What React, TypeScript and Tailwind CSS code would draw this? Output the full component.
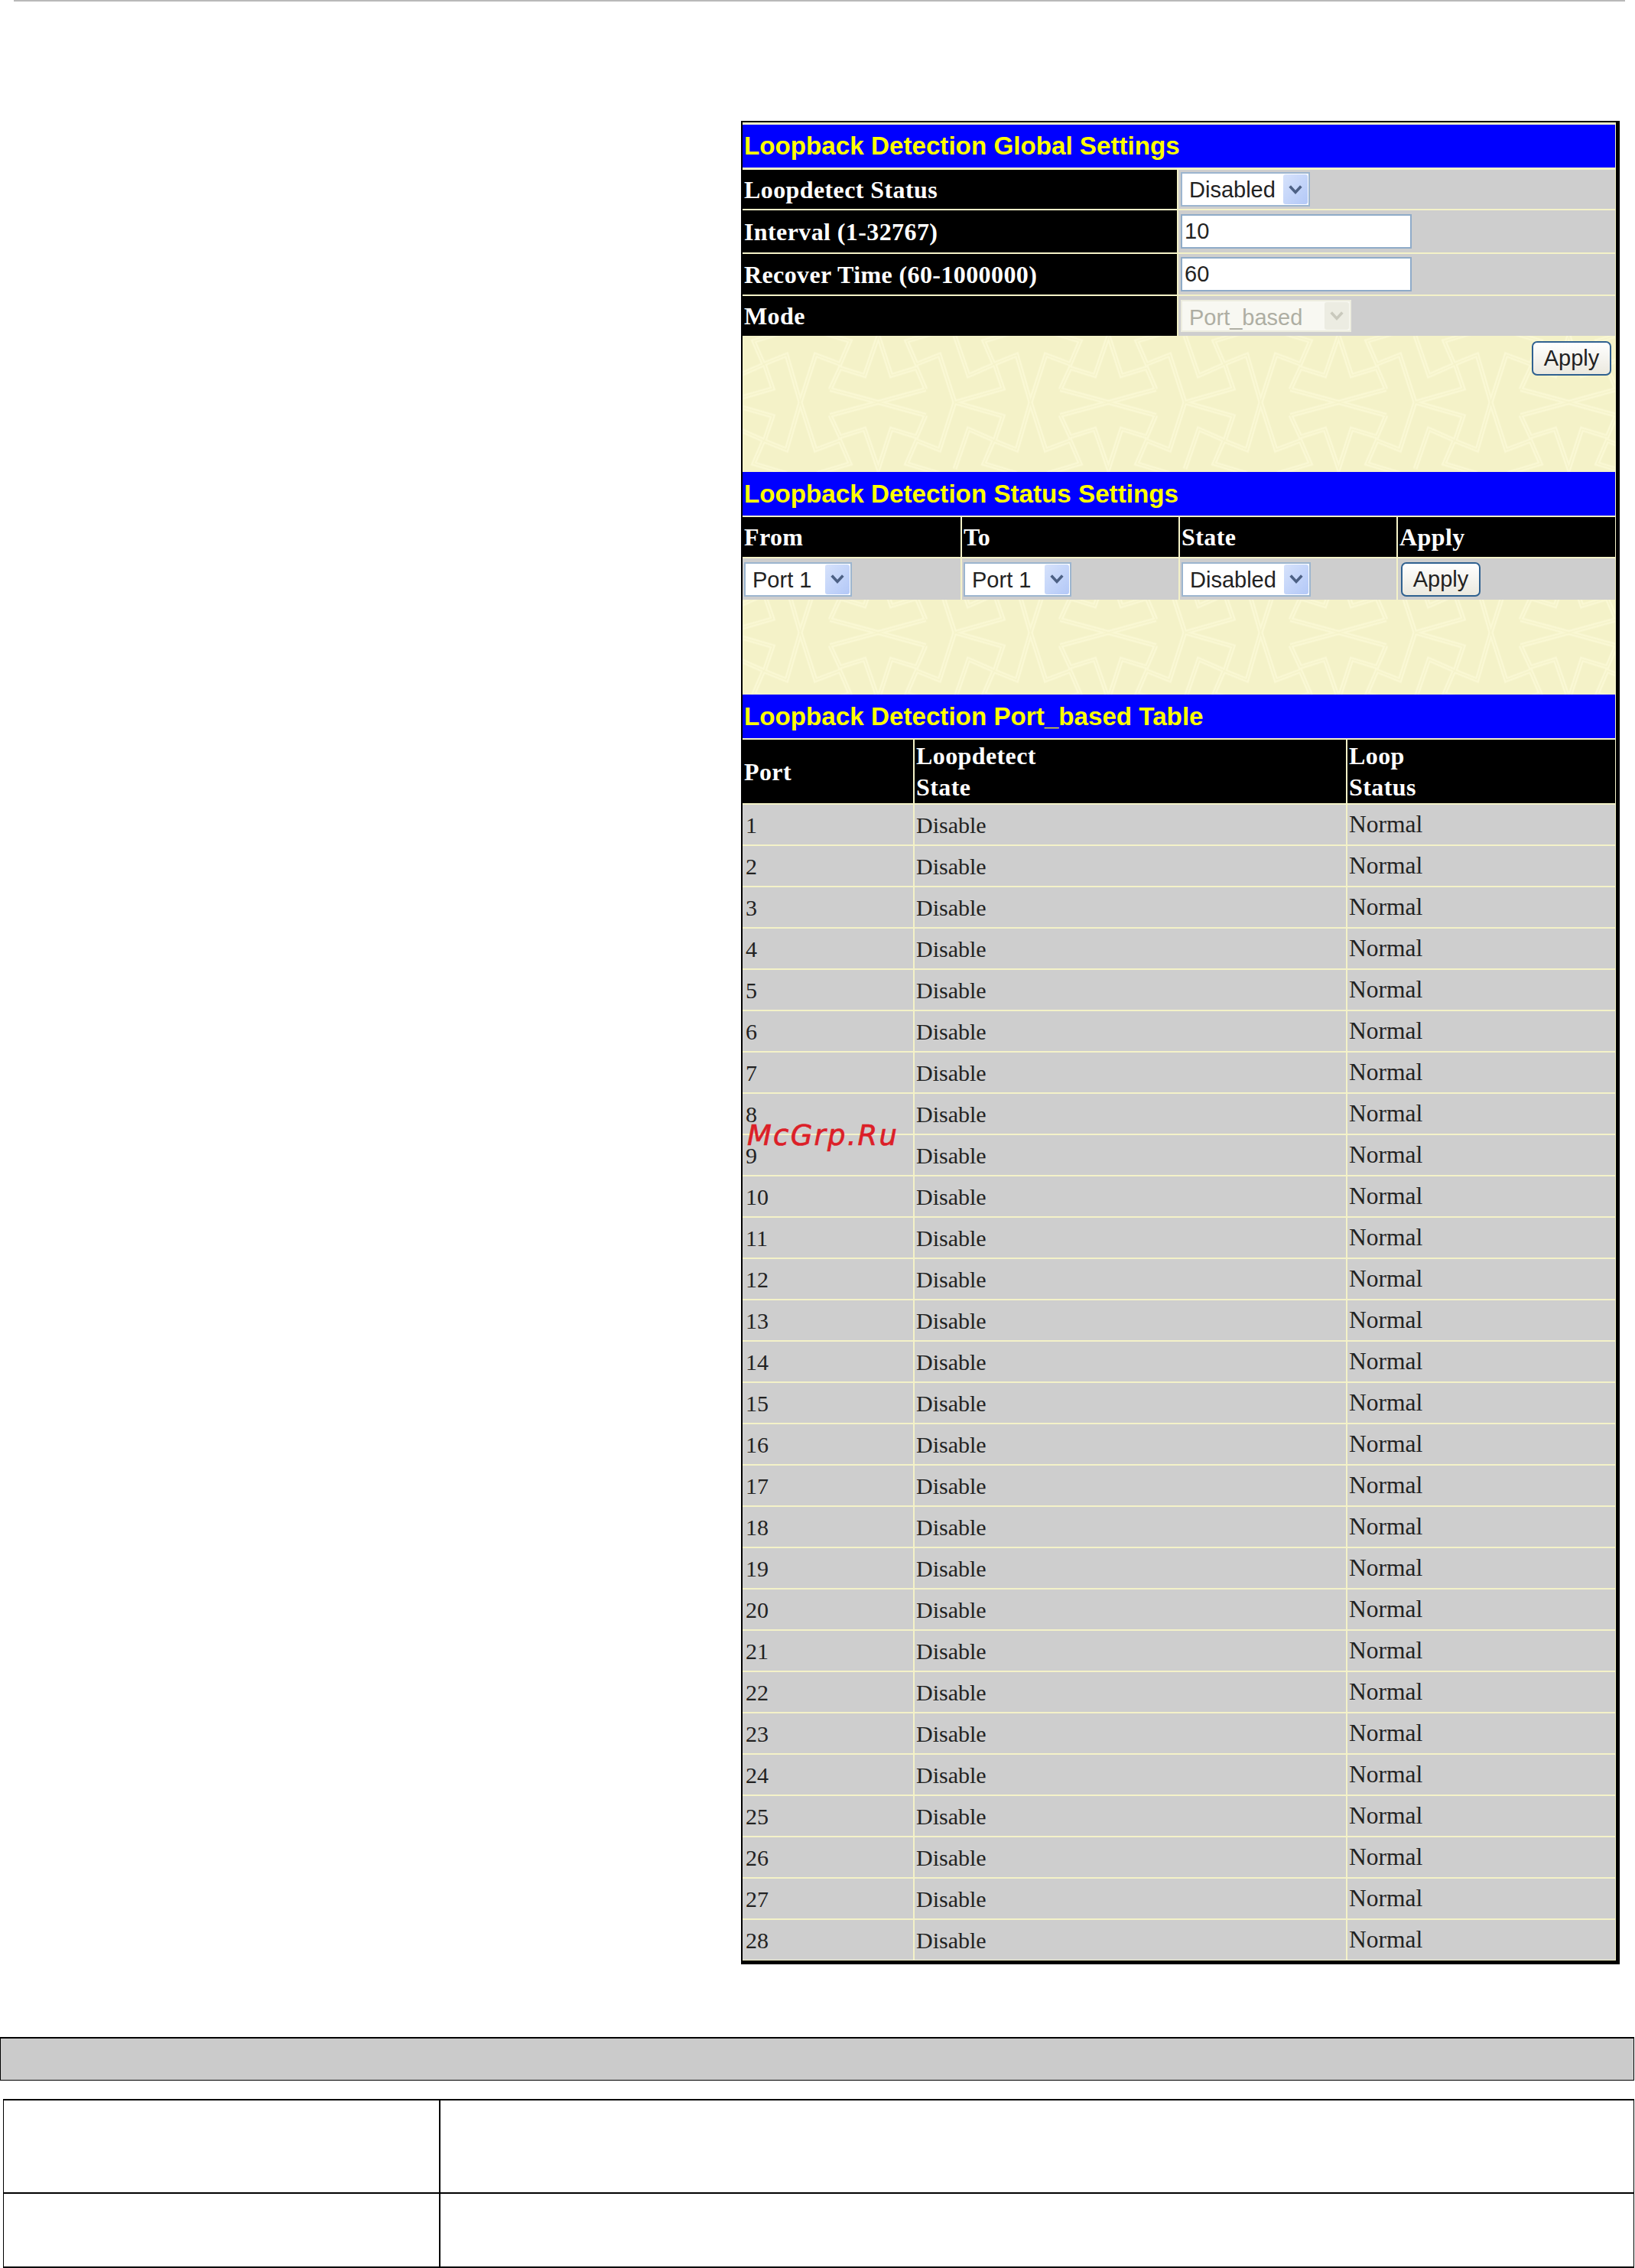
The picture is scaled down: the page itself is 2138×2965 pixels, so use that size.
const rows = Array.from({ length: 28 }, (_, i) => i + 1);

const Chevron = ({ disabled }: { disabled?: boolean }) => (
  <svg viewBox="0 0 16 12" className="w-[18px] h-[14px]">
    <path
      d="M1.5 2 L8 9 L14.5 2"
      fill="none"
      stroke={disabled ? '#c9c9bd' : '#4d6185'}
      strokeWidth="3.2"
    />
  </svg>
);

// old XP style dropdown, the blue arrow box lies over the native select
function Select({ value, className, disabled }: { value: string; className: string; disabled?: boolean }) {
  return (
    <div className={`relative ${className}`}>
      <select
        disabled={disabled}
        defaultValue={value}
        className={`appearance-none w-full h-full pl-[9px] text-[29px] font-['Liberation_Sans',sans-serif] border-2 outline-none ${
          disabled ? 'bg-[#f8f8f2] border-[#ededdf] text-[#aeaea3] opacity-100' : 'bg-white border-[#9cb5cf] text-[#222222]'
        }`}
      >
        <option>{value}</option>
      </select>
      <div
        className={`absolute right-[3px] top-[3px] bottom-[3px] w-[32px] rounded-[3px] flex items-center justify-center pointer-events-none ${
          disabled ? 'bg-[#ecece2]' : 'bg-gradient-to-br from-[#d6e2fb] to-[#b3c8f7]'
        }`}
      >
        <Chevron disabled={disabled} />
      </div>
    </div>
  );
}

const TextInput = ({ value }: { value: string }) => (
  <input
    defaultValue={value}
    className="w-[302px] h-[45px] pl-[3px] bg-white border-2 border-[#8fabc8] text-[29px] text-[#222222] font-['Liberation_Sans',sans-serif] outline-none"
  />
);

const ApplyButton = () => (
  <button className="w-[104px] h-[45px] rounded-[7px] border-2 border-[#2f6190] bg-gradient-to-b from-white to-[#ebe9df] text-[29px] leading-none text-[#222222] font-['Liberation_Sans',sans-serif]">
    Apply
  </button>
);

// upper half of the tile, origin is the flat X in the middle of the tile
const tilePaths = [
  'M-63 -17 L0 0 L62 -17',
  'M62 -17 L50 -45 L17 -35 L0 -87 L-18 -35 L-50 -45 L-63 -17',
  'M-102 0 L-82 -62 L-50 -50 L-37 -80 L-80 -93',
  'M-102 0 L-120 -62 L-150 -50 L-163 -80 L-120 -93',
  'M100 0 L80 -62 L50 -50 L37 -80 L80 -93',
  'M100 0 L163 -18 L152 -50 L118 -35 L100 -87',
];

const TileLines = () => (
  <>
    {[-301, 0, 301].map((x) => (
      <g key={x} transform={`translate(${x + 150.5} 150.5)`}>
        {tilePaths.map((d) => (
          <path key={d} d={d} />
        ))}
        <g transform="scale(1 -1)">
          {tilePaths.map((d) => (
            <path key={d} d={d} />
          ))}
        </g>
      </g>
    ))}
  </>
);

// background of the empty cream panels
const Pattern = ({ id, cy }: { id: string; cy: number }) => (
  <svg className="absolute inset-0 w-full h-full" aria-hidden="true">
    <defs>
      <pattern id={id} width="301" height="301" patternUnits="userSpaceOnUse" patternTransform={`translate(27 ${cy - 150.5})`}>
        <g fill="none" stroke="#faf8d4" strokeWidth="6" strokeLinejoin="miter">
          <TileLines />
        </g>
        <g fill="none" stroke="#f5f3ca" strokeWidth="1.4">
          <TileLines />
        </g>
      </pattern>
    </defs>
    <rect width="100%" height="100%" fill={`url(#${id})`} />
  </svg>
);

const SectionTitle = ({ children, className }: { children: string; className: string }) => (
  <div className={`bg-[#0000ff] text-[#ffff00] text-[33.2px] font-bold font-['Liberation_Sans',sans-serif] flex items-center pl-[2px] ${className}`}>
    {children}
  </div>
);

const Label = ({ children, className = '' }: { children: React.ReactNode; className?: string }) => (
  <div className={`bg-black text-white text-[32px] tracking-[0.4px] font-bold font-['Liberation_Serif',serif] flex items-center pl-[2px] ${className}`}>
    {children}
  </div>
);

export default function App() {
  return (
    <div className="w-[2138px] h-[2965px] bg-white overflow-hidden">
      <div className="h-[2px] ml-[18px] w-[2107px] bg-[#b9b9b9]" />

      {/* Screenshot of the switch web page */}
      <div className="mt-[156px] ml-[969px] w-[1149px] border-l-2 border-t-2 border-r-[5px] border-b-[5px] border-black bg-[#f4f2c8] pt-[3px] pr-[1px] pb-[1px]">
        <SectionTitle className="h-[56px] mb-[3px]">Loopback Detection Global Settings</SectionTitle>
        <div className="grid grid-cols-[568px_1fr] gap-[2px]">
          <Label className="h-[51px]">Loopdetect Status</Label>
          <div className="bg-[#cecece] flex items-center pl-[3px]">
            <Select value="Disabled" className="w-[169px] h-[45px]" />
          </div>
          <Label className="h-[55px]">Interval (1-32767)</Label>
          <div className="bg-[#cecece] flex items-center pl-[3px]">
            <TextInput value="10" />
          </div>
          <Label className="h-[53px]">Recover Time (60-1000000)</Label>
          <div className="bg-[#cecece] flex items-center pl-[3px]">
            <TextInput value="60" />
          </div>
          <Label className="h-[52px]">Mode</Label>
          <div className="bg-[#cecece] flex items-center pl-[3px]">
            <Select value="Port_based" disabled className="w-[223px] h-[42px]" />
          </div>
        </div>
        <div className="relative h-[178px]">
          <Pattern id="p1" cy={87} />
          <div className="relative flex justify-end pt-[7px] pr-[5px]">
            <ApplyButton />
          </div>
        </div>

        <SectionTitle className="h-[57px] mb-[2px]">Loopback Detection Status Settings</SectionTitle>
        <div className="grid grid-cols-[285px_283px_283px_1fr] gap-[2px]">
          {['From', 'To', 'State', 'Apply'].map((h) => (
            <Label key={h} className="h-[52px]">
              {h}
            </Label>
          ))}
          <div className="bg-[#cecece] h-[54px] flex items-center pl-[2px]">
            <Select value="Port 1" className="w-[141px] h-[45px]" />
          </div>
          <div className="bg-[#cecece] h-[54px] flex items-center pl-[2px]">
            <Select value="Port 1" className="w-[141px] h-[45px]" />
          </div>
          <div className="bg-[#cecece] h-[54px] flex items-center pl-[2px]">
            <Select value="Disabled" className="w-[169px] h-[45px]" />
          </div>
          <div className="bg-[#cecece] h-[54px] flex items-center pl-[4px]">
            <ApplyButton />
          </div>
        </div>
        <div className="relative h-[124px]">
          <Pattern id="p2" cy={43} />
        </div>

        <SectionTitle className="h-[57px] mb-[2px]">Loopback Detection Port_based Table</SectionTitle>
        <div className="relative grid grid-cols-[223px_564px_1fr] gap-[2px]">
          <Label className="h-[83px]">Port</Label>
          <Label className="h-[83px] leading-[41px]">
            Loopdetect
            <br />
            State
          </Label>
          <Label className="h-[83px] leading-[41px]">
            Loop
            <br />
            Status
          </Label>
          {rows.map((n) => (
            <div key={n} className="contents">
              <div className="h-[52px] bg-[#cecece] text-[#222222] text-[30px] font-['Liberation_Serif',serif] flex items-center pl-[4px]">{n}</div>
              <div className="h-[52px] bg-[#cecece] text-[#222222] text-[30px] font-['Liberation_Serif',serif] flex items-center pl-[2px]">Disable</div>
              <div className="h-[52px] bg-[#cecece] text-[#222222] text-[31.5px] font-['Liberation_Serif',serif] flex items-center pl-[2px]">Normal</div>
            </div>
          ))}
          {/* site watermark over the table */}
          <div className="absolute left-[6px] top-[499px] text-[37px] leading-none italic tracking-[2.2px] text-[#dc1f28] [-webkit-text-stroke:0.7px_#dc1f28] font-['DejaVu_Sans',sans-serif]">
            McGrp.Ru
          </div>
        </div>
      </div>

      {/* Empty table of the manual below the screenshot */}
      <div className="mt-[95px] h-[57px] w-[2137px] bg-[#cbcbcb] border border-black border-t-2" />
      <div className="mt-[24px] ml-[4px] w-[2133px] h-[221px] border-l border-r border-black border-t-2 border-b-2 grid grid-cols-[571px_1fr] grid-rows-[120px_1fr]">
        <div className="border-r-2 border-black" />
        <div />
        <div className="border-r-2 border-t-2 border-black" />
        <div className="border-t-2 border-black" />
      </div>
    </div>
  );
}
